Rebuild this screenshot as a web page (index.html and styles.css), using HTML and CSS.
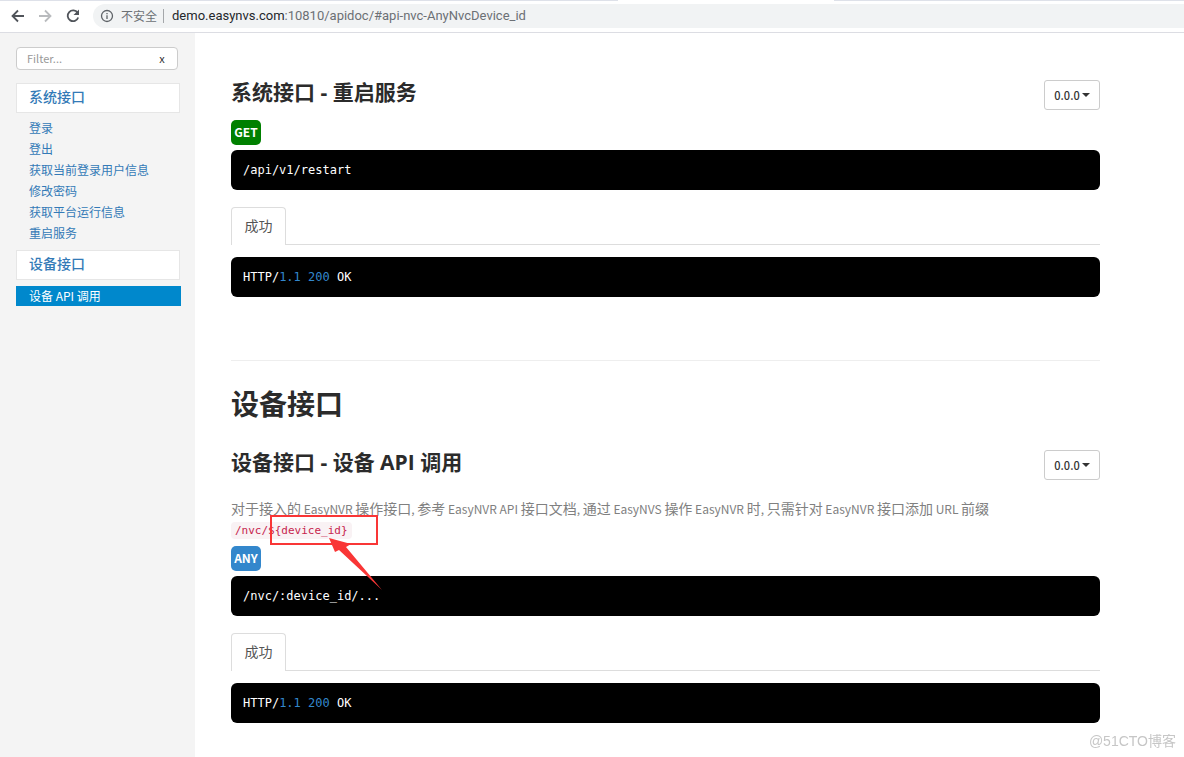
FILE: index.html
```html
<!DOCTYPE html>
<html lang="zh-CN">
<head>
<meta charset="utf-8">
<title>EasyNVS API</title>
<link rel="stylesheet" href="styles.css">
</head>
<body>
<header class="browser">
  <div class="tabs"><span class="tab-rest tab-left"></span><span class="tab-active"></span><span class="tab-rest tab-right"></span></div>
  <div class="toolbar">
    <button class="tool" aria-label="后退"><svg width="16" height="16" viewBox="0 0 16 16"><path d="M15 8H4M9 2.500 3.500 8 9 13.500" /></svg></button>
    <button class="tool disabled" aria-label="前进"><svg width="16" height="16" viewBox="0 0 16 16"><path d="M2 8h11M8 2.500 13.500 8 8 13.500" /></svg></button>
    <button class="tool" aria-label="刷新"><svg width="16" height="16" viewBox="0 0 16 16"><path d="M12.600 4.800A5.400 5.400 0 1 0 13.200 9.500" /><path class="solid" d="M14 1.500V7H8.500z" /></svg></button>
    <div class="address">
      <svg class="info" width="14" height="14" viewBox="0 0 14 14"><circle cx="7" cy="7" r="5.500" /><path d="M7 6.300v3.700M7 3.900v1.400" /></svg>
      <span class="insecure">不安全</span>
      <span class="url"><b>demo.easynvs.com</b>:10810/apidoc/#api-nvc-AnyNvcDevice_id</span>
    </div>
  </div>
</header>
<div class="page">
  <nav class="sidebar">
    <div class="filter"><input type="text" placeholder="Filter..." aria-label="Filter"><button aria-label="清除">x</button></div>
    <a class="group" href="#sys">系统接口</a>
    <ul class="links">
      <li><a href="#login">登录</a></li>
      <li><a href="#logout">登出</a></li>
      <li><a href="#user">获取当前登录用户信息</a></li>
      <li><a href="#password">修改密码</a></li>
      <li><a href="#server">获取平台运行信息</a></li>
      <li><a href="#restart">重启服务</a></li>
    </ul>
    <a class="group" href="#nvc">设备接口</a>
    <a class="active" href="#any">设备 API 调用</a>
  </nav>
  <main class="content">
    <article class="api" id="restart">
      <div class="head"><h2>系统接口 - 重启服务</h2><button class="version">0.0.0<i class="caret"></i></button></div>
      <span class="method get">GET</span>
      <pre class="code">/api/v1/restart</pre>
      <div class="tablist"><button class="tab">成功</button></div>
      <pre class="code">HTTP/<span class="num">1.1</span> <span class="num">200</span> OK</pre>
    </article>
    <hr class="rule">
    <section id="nvc">
      <h1>设备接口</h1>
      <article class="api" id="any">
        <div class="head"><h2>设备接口 - 设备 API 调用</h2><button class="version">0.0.0<i class="caret"></i></button></div>
        <p class="desc">对于接入的<span class="latin"> EasyNVR </span>操作接口<span class="latin">, </span>参考<span class="latin"> EasyNVR API </span>接口文档<span class="latin">, </span>通过<span class="latin"> EasyNVS </span>操作<span class="latin"> EasyNVR </span>时<span class="latin">, </span>只需针对<span class="latin"> EasyNVR </span>接口添加<span class="latin"> URL </span>前缀<br><span class="marked"><code>/nvc/${device_id}</code><svg class="mark" width="120" height="80" viewBox="0 0 120 80"><rect x="2" y="2" width="106" height="28" /><path d="M60 24 82 30 77 33 113 76 70 36 66 38z" /></svg></span></p>
        <span class="method any">ANY</span>
        <pre class="code">/nvc/:device_id/...</pre>
        <div class="tablist"><button class="tab">成功</button></div>
        <pre class="code">HTTP/<span class="num">1.1</span> <span class="num">200</span> OK</pre>
      </article>
    </section>
  </main>
</div>
<div class="watermark">@51CTO博客</div>
</body>
</html>
```
FILE: styles.css
```css
* { box-sizing: border-box; }
body {
  margin: 0;
  min-height: 100vh;
  display: flex;
  flex-direction: column;
  background: #fff;
  color: #2b2b2b;
  font: 14px/20px "Noto Sans CJK SC", sans-serif;
}
button { margin: 0; padding: 0; border: 0; background: none; color: inherit; font: inherit; }
a { color: #337ab7; text-decoration: none; }

/* Browser chrome */
.browser { border-bottom: 1px solid #dcdde3; }
.tabs { display: flex; height: 1px; }
.tab-rest { background: #dee1e9; }
.tab-left { flex: 618; }
.tab-active { flex: 216; }
.tab-right { flex: 350; }
.toolbar { display: flex; align-items: center; height: 31px; padding: 0 0 1px 9px; }
.tool { width: 16px; height: 16px; margin-right: 12px; }
.tool svg { display: block; fill: none; stroke: #50545a; stroke-width: 1.8; }
.tool .solid { fill: #50545a; stroke: none; }
.tool.disabled svg { stroke: #b9bbbe; }
.address {
  flex: 1;
  display: flex;
  align-items: center;
  height: 24px;
  padding-left: 7px;
  border-radius: 12px 0 0 12px;
  background: #f1f3f4;
  color: #6c7075;
}
.info { fill: none; stroke: #5f6368; stroke-width: 1.3; }
.insecure { margin-left: 7px; padding-right: 6px; border-right: 1px solid #a4a7aa; font-size: 12px; line-height: 14px; }
.url { margin-left: 8px; font: 13px/20px Roboto, sans-serif; }
.url b { color: #24272b; font-weight: 400; }

/* Sidebar */
.page { flex: 1; display: flex; }
.sidebar { flex: 0 0 195px; padding: 14px 14px 0 16px; background: #f4f4f4; }
.filter {
  display: flex;
  height: 23px;
  margin-right: 3px;
  border: 1px solid #ccc;
  border-radius: 4px;
  background: #fff;
  font-size: 11px;
}
.filter input { flex: 1; width: 0; min-width: 0; padding: 0 10px 2px; border: 0; background: none; font: inherit; outline: 0; }
.filter input::placeholder { color: #999; }
.filter button { width: 30px; padding-bottom: 2px; color: #333; }
.group {
  display: block;
  height: 30px;
  margin-right: 1px;
  padding-left: 12px;
  border: 1px solid #e6e6e6;
  background: #fff;
  font-size: 14px;
  font-weight: 500;
  line-height: 25px;
}
.filter + .group { margin-top: 13px; }
.links { margin: 4px 0 7px; padding: 0; list-style: none; font-size: 12px; line-height: 21px; }
.links a { display: block; padding-left: 13px; }
.active { display: block; margin-top: 6px; padding-left: 13px; background: #0088cc; color: #fff; font-size: 12px; line-height: 20px; }

/* Documentation */
.content { flex: 1; min-width: 0; padding: 43px 84px 0 36px; }
.head { display: flex; justify-content: space-between; align-items: flex-start; }
h1, h2 { font-family: "Open Sans", "Noto Sans CJK SC", sans-serif; }
h1 { margin: 23px 0 0; font-size: 28px; line-height: 40px; }
h2 { margin: 0; font-size: 21px; line-height: 32px; }
.version {
  display: flex;
  align-items: center;
  justify-content: center;
  gap: 2px;
  width: 56px;
  height: 30px;
  margin-top: 4px;
  border: 1px solid #ccc;
  border-radius: 3px;
  color: #333;
  font-size: 11px;
  font-weight: 500;
}
.caret { border: 4px solid transparent; border-top-color: #333; border-bottom: 0; }
.method {
  display: block;
  width: 30px;
  height: 25px;
  border-radius: 5px;
  color: #fff;
  font-size: 12px;
  font-weight: 700;
  line-height: 24px;
  text-align: center;
}
.get { margin-top: 10px; background: green; }
.any { margin-top: 7px; background: #3387cc; }
.code {
  height: 40px;
  margin: 5px 0 0;
  padding: 0 12px;
  border-radius: 6px;
  background: #000;
  color: #fff;
  font: 12px/40px "DejaVu Sans Mono", monospace;
}
.num { color: #3387cc; }
.tablist { display: flex; margin-top: 17px; border-bottom: 1px solid #ddd; }
.tab {
  width: 55px;
  height: 38px;
  margin-bottom: -1px;
  padding-bottom: 3px;
  border: 1px solid #ddd;
  border-bottom: 0;
  border-radius: 4px 4px 0 0;
  background: #fff;
  color: #555;
}
.tablist + .code { margin-top: 12px; }
.rule { height: 1px; margin: 63px 0 0; border: 0; background: #eee; }
section .api { margin-top: 22px; }
.desc { margin: 18px 0 0; color: #808080; }
.latin { font-size: 12px; line-height: 16px; }
.desc code { padding: 2px 4px; border-radius: 4px; background: #f9f2f4; color: #c7254e; font: 11px/16px "DejaVu Sans Mono", monospace; }
.marked { position: relative; }

/* Annotation drawn over the parameter */
.mark { position: absolute; left: 38px; top: -4px; fill: none; stroke: #f93636; stroke-width: 2; }
.mark path { fill: #f93636; stroke: none; }
.watermark { position: fixed; right: 8px; bottom: 6px; color: #c6c6c6; font: 14px/20px "Liberation Sans", "Noto Sans CJK SC", sans-serif; }
```
